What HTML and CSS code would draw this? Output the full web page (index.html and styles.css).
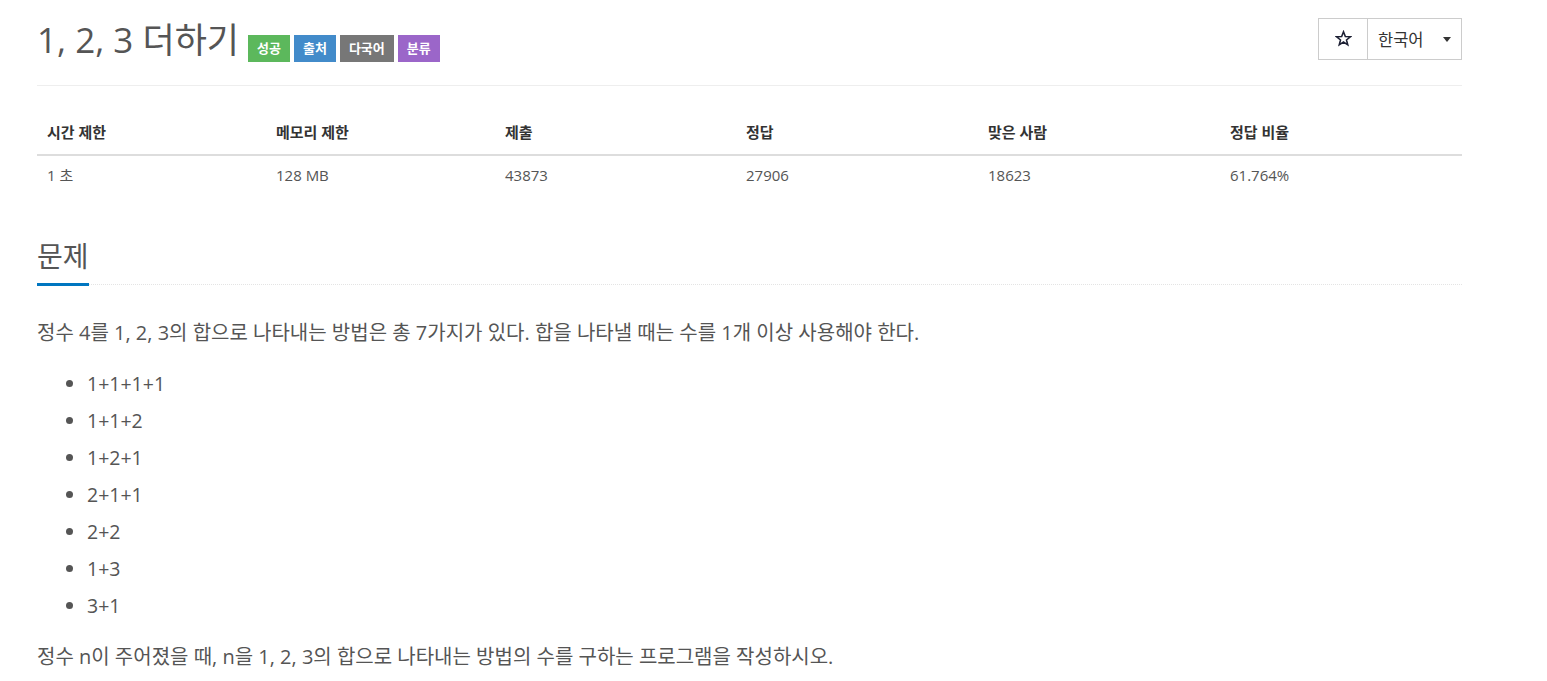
FILE: index.html
```html
<!DOCTYPE html>
<html lang="ko">
<head>
<meta charset="utf-8">
<title>1, 2, 3 더하기</title>
<link rel="stylesheet" href="styles.css">
</head>
<body>
<div class="container">
  <div class="page-header">
    <h1 class="title">
      <span class="title-text">1, 2, 3 더하기</span>
      <span class="labels">
        <span class="label label-green">성공</span>
        <span class="label label-blue">출처</span>
        <span class="label label-gray">다국어</span>
        <span class="label label-purple">분류</span>
      </span>
    </h1>
    <div class="btn-group">
      <button class="btn btn-star" aria-label="즐겨찾기">
        <svg class="star" width="17" height="17" viewBox="0 0 24 24"><path d="M12 2.5l2.6 6.6 7.1.4-5.5 4.5 1.8 6.9L12 17l-6 3.9 1.8-6.9-5.5-4.5 7.1-.4z" fill="none" stroke="#1c1f33" stroke-width="2.2" stroke-linejoin="miter"/></svg>
      </button>
      <button class="btn btn-lang">한국어<span class="caret"></span></button>
    </div>
  </div>

  <table class="info">
    <thead>
      <tr>
        <th class="c1">시간 제한</th>
        <th class="c2">메모리 제한</th>
        <th class="c3">제출</th>
        <th class="c4">정답</th>
        <th class="c5">맞은 사람</th>
        <th class="c6">정답 비율</th>
      </tr>
    </thead>
    <tbody>
      <tr>
        <td>1 초</td>
        <td>128 MB</td>
        <td>43873</td>
        <td>27906</td>
        <td>18623</td>
        <td>61.764%</td>
      </tr>
    </tbody>
  </table>

  <section class="problem">
    <div class="headline"><h2>문제</h2></div>
    <p>정수 4를 1, 2, 3의 합으로 나타내는 방법은 총 7가지가 있다. 합을 나타낼 때는 수를 1개 이상 사용해야 한다.</p>
    <ul>
      <li>1+1+1+1</li>
      <li>1+1+2</li>
      <li>1+2+1</li>
      <li>2+1+1</li>
      <li>2+2</li>
      <li>1+3</li>
      <li>3+1</li>
    </ul>
    <p>정수 n이 주어졌을 때, n을 1, 2, 3의 합으로 나타내는 방법의 수를 구하는 프로그램을 작성하시오.</p>
  </section>
</div>
</body>
</html>
```
FILE: styles.css
```css
* { box-sizing: border-box; }
html, body {
  margin: 0;
  padding: 0;
  background: #fff;
}
body {
  font-family: "Open Sans", "Noto Sans CJK KR", sans-serif;
  font-size: 14px;
  color: #555;
}
.container {
  width: 1425px;
  margin-left: 37px;
}
.page-header {
  display: flex;
  justify-content: space-between;
  align-items: flex-start;
  padding-top: 18px;
  padding-bottom: 23px;
  border-bottom: 1px solid #eee;
}
.title {
  margin: 0;
  font-weight: 400;
  font-size: 35px;
  line-height: 44px;
  color: #555;
  display: flex;
  align-items: flex-end;
}
.labels {
  display: flex;
  gap: 4px;
  margin-left: 9px;
}
.label {
  display: inline-block;
  height: 27px;
  line-height: 27px;
  padding: 0 9px;
  font-size: 13px;
  font-weight: 700;
  color: #fff;
}
.label-green { background: #5cb85c; }
.label-blue { background: #428bca; }
.label-gray { background: #777; }
.label-purple { background: #9b66c9; }

.btn-group {
  display: flex;
}
.btn {
  font-family: "Open Sans", "Noto Sans CJK KR", sans-serif;
  background: #fff;
  border: 1px solid #ccc;
  height: 42px;
  margin: 0;
  color: #333;
  display: flex;
  align-items: center;
  justify-content: center;
}
.btn-star {
  width: 50px;
  padding: 0 0 2px 0;
}
.star {
  display: block;
}
.btn-lang {
  width: 94px;
  border-left: none;
  font-size: 16.5px;
  justify-content: flex-start;
  padding: 0 0 0 10px;
}
.caret {
  display: inline-block;
  width: 0;
  height: 0;
  margin-left: 19px;
  border-top: 5px solid #333;
  border-left: 4px solid transparent;
  border-right: 4px solid transparent;
}

.info {
  width: 1425px;
  border-collapse: collapse;
  margin-top: 21px;
  table-layout: fixed;
}
.info th, .info td {
  text-align: left;
  padding: 0 10px;
  font-size: 15px;
}
.info th {
  font-weight: 700;
  color: #333;
  height: 48px;
  border-bottom: 2px solid #ddd;
  padding-top: 2px;
}
.info td {
  height: 38px;
  color: #555;
}
.c1 { width: 229px; }
.c2 { width: 229px; }
.c3 { width: 241px; }
.c4 { width: 242px; }
.c5 { width: 242px; }
.c6 { width: 242px; }

.problem {
  margin-top: 43px;
}
.headline {
  border-bottom: 1px dotted #e4e4e4;
}
.headline h2 {
  display: inline-block;
  margin: 0 0 -2px 0;
  font-size: 28px;
  font-weight: 400;
  color: #555;
  line-height: 40px;
  padding-bottom: 7px;
  border-bottom: 3px solid #0076c0;
}
.problem p {
  font-size: 20px;
  line-height: 30px;
  margin: 33px 0 0 0;
  color: #555;
}
.problem ul {
  margin: 21px 0 21px 0;
  padding-left: 50px;
}
.problem li {
  font-size: 19.5px;
  line-height: 30px;
  margin-bottom: 7px;
  color: #555;
}
.problem ul + p {
  margin-top: 0;
}
```
